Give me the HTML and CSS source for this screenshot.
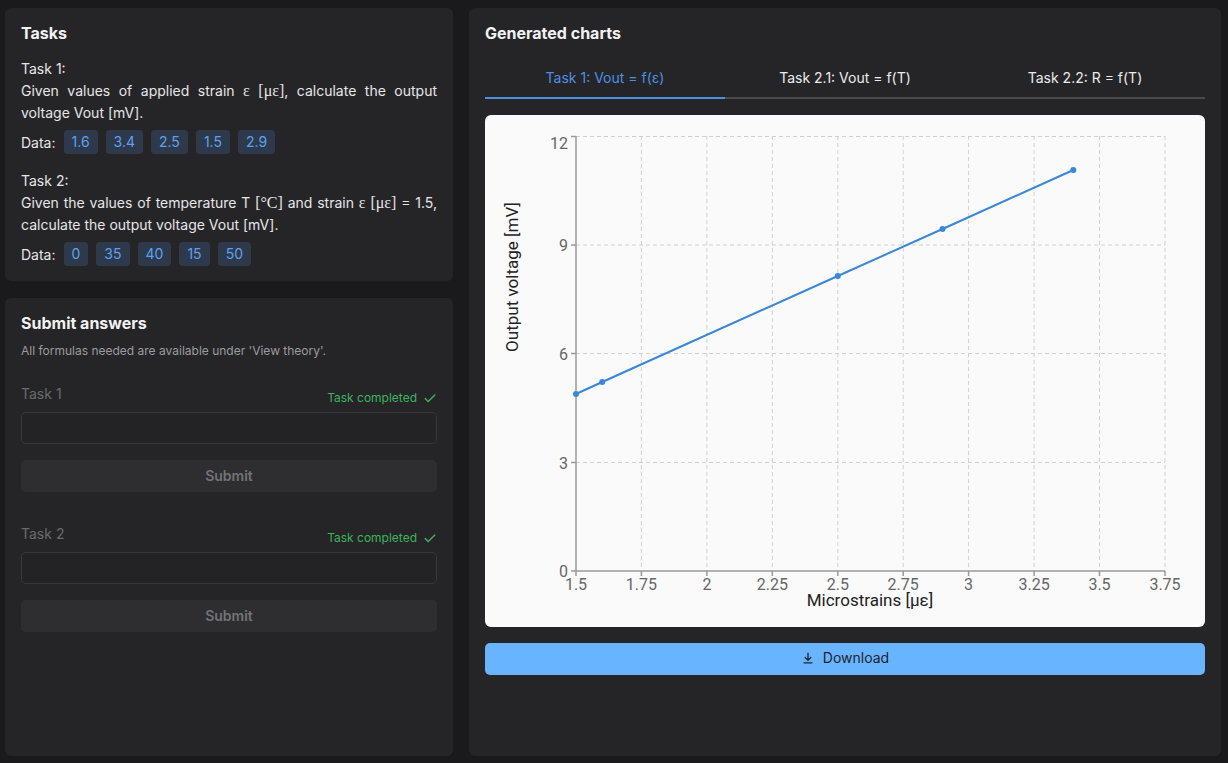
FILE: index.html
```html
<!DOCTYPE html>
<html>
<head>
<meta charset="utf-8">
<link rel="stylesheet" href="styles.css">
</head>
<body>
<div class="layout">
  <div class="left">
    <section class="card tasks">
      <h2 class="card-title">Tasks</h2>
      <div class="task">
        <div class="task-label">Task 1:</div>
        <p class="task-text">Given values of applied strain <span class="math">ε [με]</span>, calculate the output voltage Vout [mV].</p>
        <div class="data-row">
          <span class="data-label">Data:</span>
          <span class="badge">1.6</span><span class="badge">3.4</span><span class="badge">2.5</span><span class="badge">1.5</span><span class="badge">2.9</span>
        </div>
      </div>
      <div class="task task2">
        <div class="task-label">Task 2:</div>
        <p class="task-text">Given the values of temperature T <span class="math">[°C]</span> and strain <span class="math">ε [με]</span> = 1.5, calculate the output voltage Vout [mV].</p>
        <div class="data-row">
          <span class="data-label">Data:</span>
          <span class="badge">0</span><span class="badge">35</span><span class="badge">40</span><span class="badge">15</span><span class="badge">50</span>
        </div>
      </div>
    </section>
    <section class="card submit">
      <h2 class="card-title">Submit answers</h2>
      <p class="hint">All formulas needed are available under 'View theory'.</p>
      <div class="field">
        <div class="field-head">
          <span class="field-label">Task 1</span>
          <span class="done">Task completed <svg class="check" viewBox="0 0 16 16" width="14" height="14"><path d="M2.5 8.5l3.5 3.5 7.5-7.5" fill="none" stroke="currentColor" stroke-width="1.6" stroke-linecap="round" stroke-linejoin="round"/></svg></span>
        </div>
        <div class="input"></div>
        <div class="btn-disabled">Submit</div>
      </div>
      <div class="field field2">
        <div class="field-head">
          <span class="field-label">Task 2</span>
          <span class="done">Task completed <svg class="check" viewBox="0 0 16 16" width="14" height="14"><path d="M2.5 8.5l3.5 3.5 7.5-7.5" fill="none" stroke="currentColor" stroke-width="1.6" stroke-linecap="round" stroke-linejoin="round"/></svg></span>
        </div>
        <div class="input"></div>
        <div class="btn-disabled">Submit</div>
      </div>
    </section>
  </div>
  <section class="card charts">
    <h2 class="card-title">Generated charts</h2>
    <div class="tabs">
      <div class="tab active">Task 1: Vout = f(ε)</div>
      <div class="tab">Task 2.1: Vout = f(T)</div>
      <div class="tab">Task 2.2: R = f(T)</div>
    </div>
    <div class="chart">
      <svg width="720" height="512" viewBox="0 0 720 512" font-family="Roboto, 'Liberation Sans', sans-serif">
        <g stroke="#d0d0d0" stroke-width="1" stroke-dasharray="4 3">
          <line x1="91" y1="21.5" x2="680" y2="21.5"/>
          <line x1="91" y1="130" x2="680" y2="130"/>
          <line x1="91" y1="238.5" x2="680" y2="238.5"/>
          <line x1="91" y1="347.5" x2="680" y2="347.5"/>
          <line x1="156.4" y1="21" x2="156.4" y2="456"/>
          <line x1="221.9" y1="21" x2="221.9" y2="456"/>
          <line x1="287.3" y1="21" x2="287.3" y2="456"/>
          <line x1="352.8" y1="21" x2="352.8" y2="456"/>
          <line x1="418.2" y1="21" x2="418.2" y2="456"/>
          <line x1="483.6" y1="21" x2="483.6" y2="456"/>
          <line x1="549.1" y1="21" x2="549.1" y2="456"/>
          <line x1="614.5" y1="21" x2="614.5" y2="456"/>
          <line x1="680" y1="21" x2="680" y2="456"/>
        </g>
        <g stroke="#9a9a9a" stroke-width="1.5">
          <line x1="91" y1="21" x2="91" y2="456"/>
          <line x1="91" y1="456" x2="680" y2="456"/>
          <line x1="86" y1="21.5" x2="91" y2="21.5"/>
          <line x1="86" y1="130" x2="91" y2="130"/>
          <line x1="86" y1="238.5" x2="91" y2="238.5"/>
          <line x1="86" y1="347.5" x2="91" y2="347.5"/>
          <line x1="86" y1="456" x2="91" y2="456"/>
          <line x1="91" y1="456" x2="91" y2="461"/>
          <line x1="156.4" y1="456" x2="156.4" y2="461"/>
          <line x1="221.9" y1="456" x2="221.9" y2="461"/>
          <line x1="287.3" y1="456" x2="287.3" y2="461"/>
          <line x1="352.8" y1="456" x2="352.8" y2="461"/>
          <line x1="418.2" y1="456" x2="418.2" y2="461"/>
          <line x1="483.6" y1="456" x2="483.6" y2="461"/>
          <line x1="549.1" y1="456" x2="549.1" y2="461"/>
          <line x1="614.5" y1="456" x2="614.5" y2="461"/>
          <line x1="680" y1="456" x2="680" y2="461"/>
        </g>
        <g fill="#666" font-size="16" text-anchor="end">
          <text x="83" y="34">12</text>
          <text x="83" y="136">9</text>
          <text x="83" y="244.5">6</text>
          <text x="83" y="353.5">3</text>
          <text x="83" y="462">0</text>
        </g>
        <g fill="#666" font-size="16" text-anchor="middle">
          <text x="91" y="475">1.5</text>
          <text x="156.4" y="475">1.75</text>
          <text x="221.9" y="475">2</text>
          <text x="287.3" y="475">2.25</text>
          <text x="352.8" y="475">2.5</text>
          <text x="418.2" y="475">2.75</text>
          <text x="483.6" y="475">3</text>
          <text x="549.1" y="475">3.25</text>
          <text x="614.5" y="475">3.5</text>
          <text x="680" y="475">3.75</text>
        </g>
        <text x="385" y="491" fill="#222" font-size="17" text-anchor="middle">Microstrains [με]</text>
        <text transform="translate(33 162) rotate(-90)" fill="#222" font-size="17" text-anchor="middle">Output voltage [mV]</text>
        <polyline points="91,279 117.2,267 352.8,161 457.5,114 588.3,55" fill="none" stroke="#3b86d6" stroke-width="2"/>
        <g fill="#3b86d6">
          <circle cx="91" cy="279" r="3"/>
          <circle cx="117.2" cy="267" r="3"/>
          <circle cx="352.8" cy="161" r="3"/>
          <circle cx="457.5" cy="114" r="3"/>
          <circle cx="588.3" cy="55" r="3"/>
        </g>
      </svg>
    </div>
    <button class="download">
      <svg viewBox="0 0 16 16" width="14" height="14"><path d="M8 2.5v8M4.8 7.5L8 10.7l3.2-3.2M3.5 13.5h9" fill="none" stroke="currentColor" stroke-width="1.5" stroke-linecap="round" stroke-linejoin="round"/></svg>
      <span>Download</span>
    </button>
  </section>
</div>
</body>
</html>
```

FILE: styles.css
```css
* { box-sizing: border-box; }
html, body { margin: 0; height: 100%; }
body {
  background: #1a1a1c;
  font-family: Inter, "Noto Sans", "Liberation Sans", sans-serif;
  color: #e6e6e6;
  font-size: 14px;
}
.layout {
  display: grid;
  grid-template-columns: 448px 752px;
  gap: 16px;
  padding: 8px 7px 7px 5px;
  height: 763px;
}
.left {
  display: flex;
  flex-direction: column;
  gap: 17px;
  min-height: 0;
}
.card {
  background: #252528;
  border-radius: 6px;
  padding: 16px;
}
.card-title {
  margin: 0;
  font-size: 16px;
  line-height: 20px;
  font-weight: 700;
  color: #f2f2f2;
}
.tasks { height: 273px; padding-top: 15px; }
.task { margin-top: 15px; }
.task2 { margin-top: 16px; }
.task-label { line-height: 22px; }
.task-text {
  margin: 0;
  line-height: 22px;
  text-align: justify;
}
.math {
  font-family: "Liberation Serif", "DejaVu Serif", serif;
  font-size: 16px;
}
.data-row {
  display: flex;
  align-items: center;
  gap: 8px;
  margin-top: 6px;
  height: 24px;
}
.badge {
  background: #2e3a4b;
  color: #5aa2f0;
  border-radius: 4px;
  height: 24px;
  line-height: 24px;
  padding: 0 8px;
}
.submit { flex: 1; padding-top: 15px; }
.hint {
  margin: 9px 0 0;
  font-size: 12px;
  line-height: 18px;
  color: #9b9b9e;
}
.field { margin-top: 24px; }
.field2 { margin-top: 32px; }
.field-head {
  display: flex;
  justify-content: space-between;
  align-items: flex-end;
  height: 20px;
}
.field-label {
  color: #6a6a6d;
  font-size: 14px;
  line-height: 20px;
}
.done {
  display: flex;
  align-items: center;
  gap: 6px;
  color: #3cb45c;
  font-size: 12px;
  line-height: 16px;
  margin-bottom: -2px;
}
.input {
  margin-top: 8px;
  height: 32px;
  border: 1px solid #38383c;
  border-radius: 5px;
  background: #232326;
}
.btn-disabled {
  margin-top: 16px;
  height: 32px;
  line-height: 32px;
  text-align: center;
  background: #2e2e31;
  border-radius: 5px;
  color: #737376;
  font-weight: 600;
  font-size: 14px;
}
.charts { display: flex; flex-direction: column; padding-top: 15px; }
.tabs {
  display: grid;
  grid-template-columns: repeat(3, 1fr);
  margin-top: 17px;
}
.tab {
  text-align: center;
  height: 39px;
  line-height: 36px;
  border-bottom: 2px solid #4a4a4e;
  color: #ececec;
  font-size: 14px;
}
.tab.active {
  color: #4c8fe3;
  border-bottom-color: #4c8fe3;
}
.chart {
  margin-top: 16px;
  height: 512px;
  background: #fafafa;
  border-radius: 6px;
  overflow: hidden;
}
.chart svg { display: block; }
.download {
  margin-top: 16px;
  height: 32px;
  border: none;
  border-radius: 5px;
  background: #69b4ff;
  color: #1d2530;
  font-family: inherit;
  font-size: 14px;
  display: flex;
  align-items: center;
  justify-content: center;
  gap: 8px;
  padding: 0 0 3px;
}
```
